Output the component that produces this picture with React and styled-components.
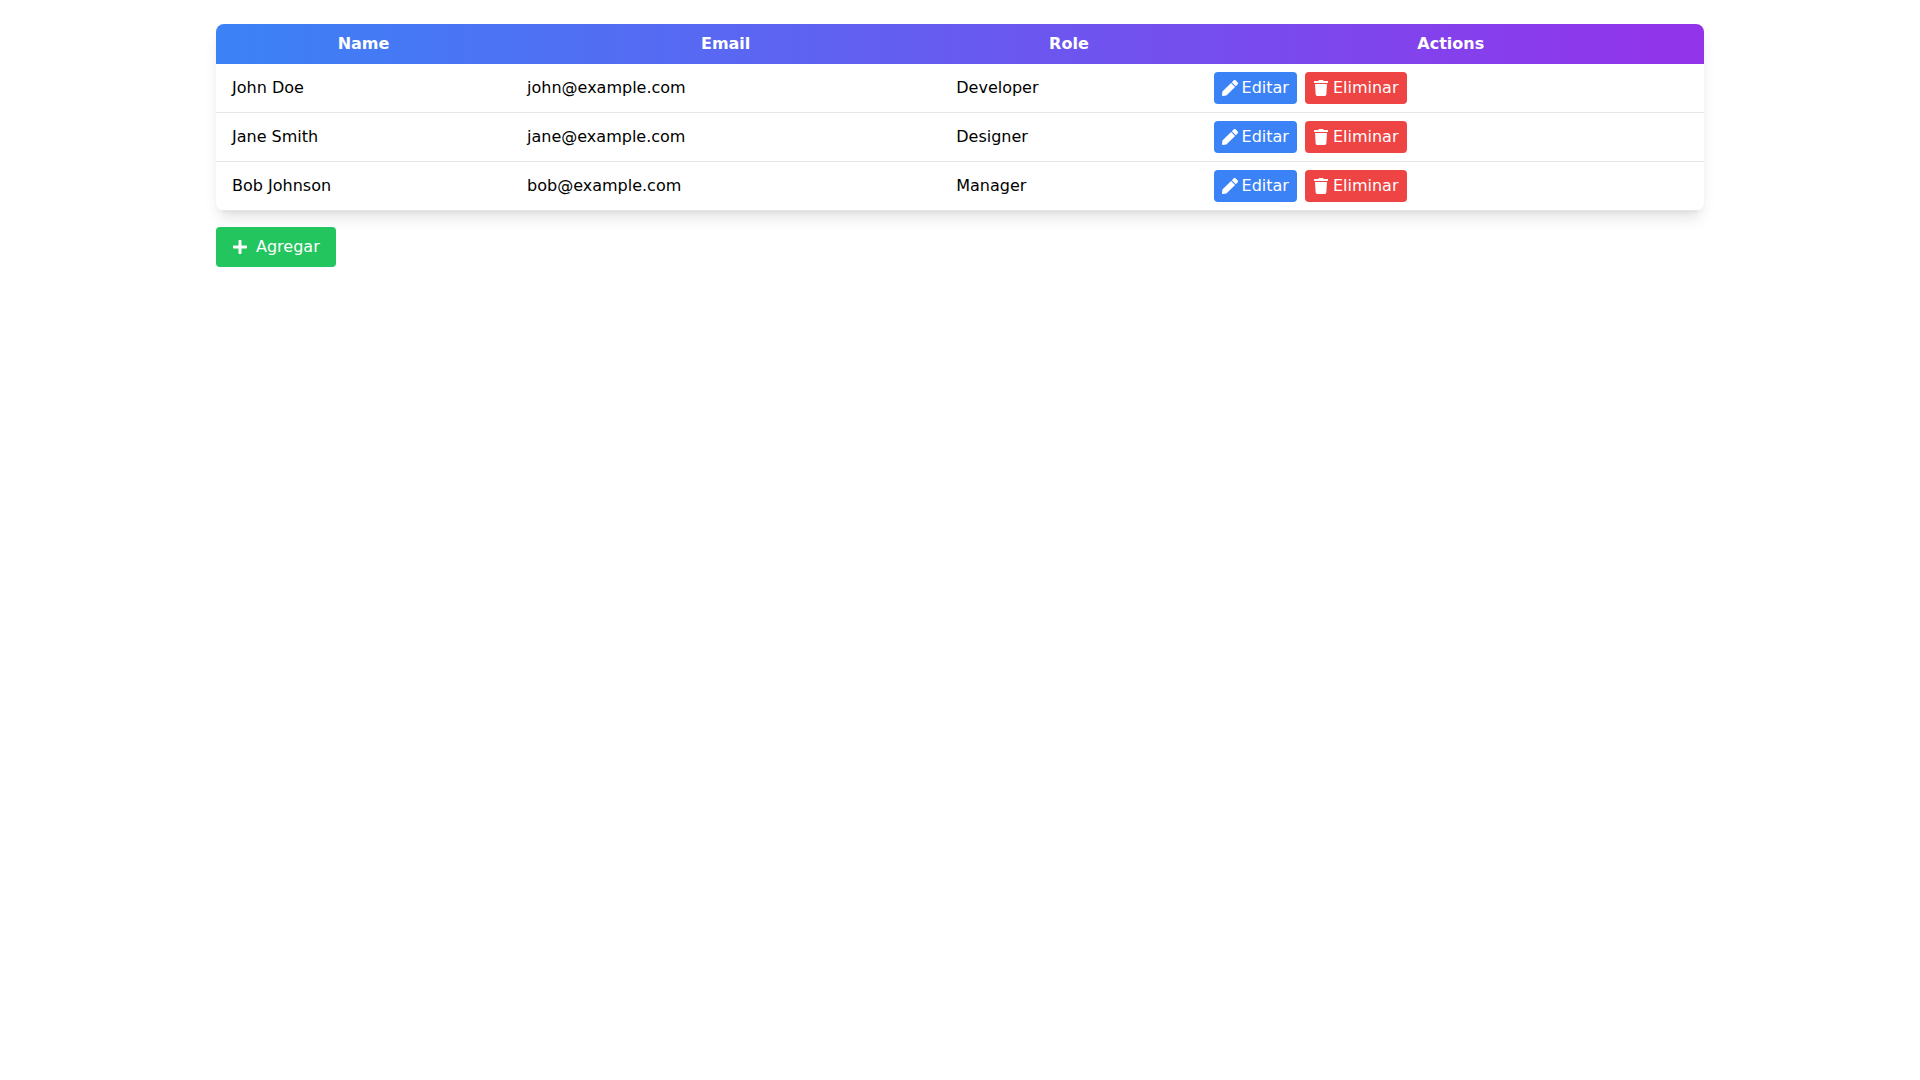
import React from "react";
import styled, { createGlobalStyle } from "styled-components";
import { FaPen, FaTrash, FaPlus } from "react-icons/fa";

const Global = createGlobalStyle`
  html, body { margin: 0; padding: 0; background: #fff; }
  body { font-family: "DejaVu Sans", sans-serif; font-size: 16px; line-height: 24px; color: #000; -webkit-font-smoothing: antialiased; }
  * { box-sizing: border-box; }
`;

const Page = styled.main`
  width: 1488px;
  margin: 0 auto;
  padding: 24px 0;
`;

const Card = styled.div`
  border-radius: 8px;
  overflow: hidden;
  background: #fff;
  box-shadow: 0 10px 15px -3px rgba(0,0,0,.1), 0 4px 6px -4px rgba(0,0,0,.1);
`;

const Table = styled.table`
  width: 100%;
  border-collapse: collapse;
`;

const HeadRow = styled.tr`
  background: linear-gradient(to right, #3b82f6, #9333ea);
  color: #fff;
`;

const Th = styled.th`
  padding: 8px 16px;
  font-weight: 700;
  text-align: center;
`;

const Row = styled.tr`
  border-bottom: 1px solid #e5e7eb;
`;

const Td = styled.td`
  padding: 8px 16px;
`;

const Button = styled.button`
  display: inline-flex;
  align-items: center;
  height: 32px;
  padding: 4px 8px;
  border: 0;
  border-radius: 4px;
  color: #fff;
  font: inherit;
  background: ${(p) => (p.$tone === "red" ? "#ef4444" : "#3b82f6")};
  & + & { margin-left: 8px; }
  svg { width: 16px; height: 16px; margin-right: 4px; flex: none; }
`;

const AddButton = styled.button`
  display: inline-flex;
  align-items: center;
  height: 40px;
  margin-top: 16px;
  padding: 8px 16px;
  border: 0;
  border-radius: 4px;
  color: #fff;
  font: inherit;
  background: #22c55e;
  svg { width: 16px; height: 16px; margin-right: 8px; }
`;

const people = [
  ["John Doe", "john@example.com", "Developer"],
  ["Jane Smith", "jane@example.com", "Designer"],
  ["Bob Johnson", "bob@example.com", "Manager"],
];

export default function App() {
  return (
    <Page>
      <Global />
      <Card>
        <Table>
          <thead>
            <HeadRow>
              <Th>Name</Th>
              <Th>Email</Th>
              <Th>Role</Th>
              <Th>Actions</Th>
            </HeadRow>
          </thead>
          <tbody>
            {people.map(([name, email, role]) => (
              <Row key={email}>
                <Td>{name}</Td>
                <Td>{email}</Td>
                <Td>{role}</Td>
                <Td>
                  <Button><FaPen />Editar</Button>
                  <Button $tone="red"><FaTrash />Eliminar</Button>
                </Td>
              </Row>
            ))}
          </tbody>
        </Table>
      </Card>
      <AddButton><FaPlus />Agregar</AddButton>
    </Page>
  );
}
